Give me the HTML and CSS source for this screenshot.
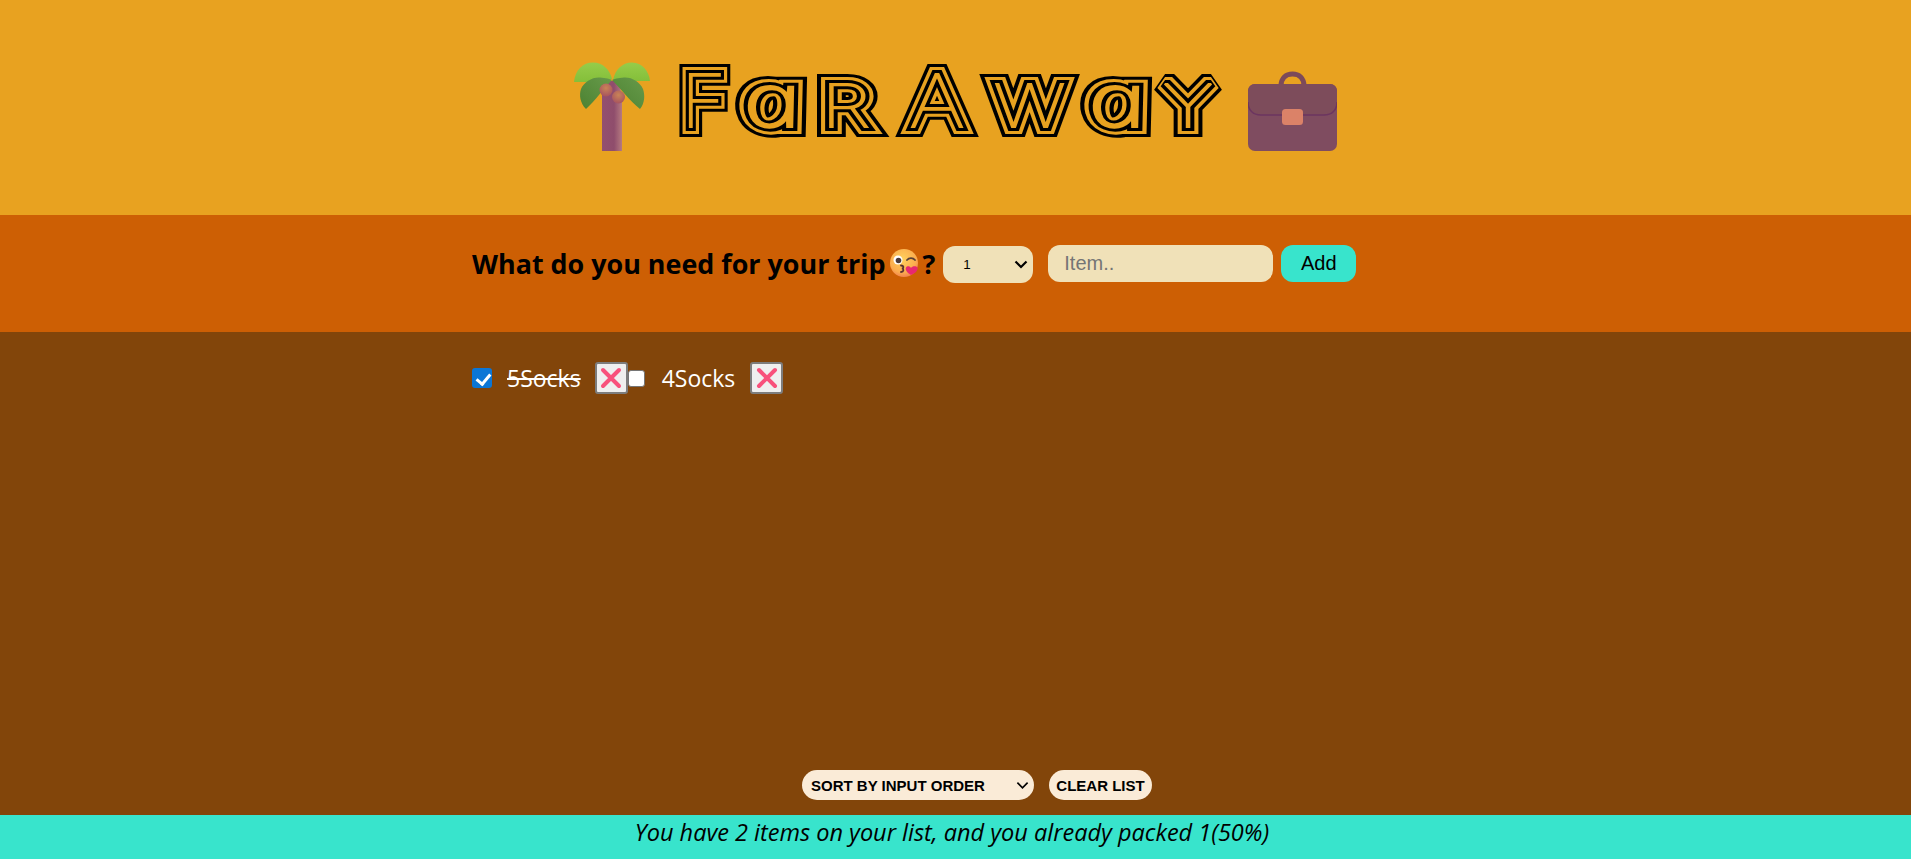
FILE: index.html
```html
<!DOCTYPE html>
<html lang="en">
<head>
<meta charset="utf-8">
<title>Far Away</title>
<link rel="stylesheet" href="styles.css">
</head>
<body>
<div class="app">
  <header class="brand">
    <svg class="palm" viewBox="4 7 76 89" aria-hidden="true">
      <defs>
        <linearGradient id="trunk" x1="0" x2="1" y1="0" y2="0"><stop offset="0" stop-color="#93506f"/><stop offset=".6" stop-color="#8f4d6c"/><stop offset="1" stop-color="#b57a80"/></linearGradient>
        <linearGradient id="leafL" x1="0" x2="0" y1="0" y2="1"><stop offset="0" stop-color="#96cc4a"/><stop offset="1" stop-color="#84bf3a"/></linearGradient>
        <linearGradient id="leafD" x1="1" x2="0" y1="0" y2="1"><stop offset="0" stop-color="#679a4a"/><stop offset="1" stop-color="#4c8232"/></linearGradient>
        <radialGradient id="nut" cx=".5" cy=".35" r=".7"><stop offset="0" stop-color="#c98457"/><stop offset="1" stop-color="#a5505f"/></radialGradient>
      </defs>
      <path d="M36 26H48L52 40V96H32V40Z" fill="url(#trunk)"/>
      <path d="M4 27C5 15 13 7.500 23 7.500C33 7.500 40 15 42 24L22 27Z" fill="url(#leafL)"/>
      <path d="M43 25C45 15 52 7.500 62 7.500C72 7.500 79 16 80 26L62 26Z" fill="url(#leafL)"/>
      <path d="M16 54C10 48 9 40 11 34C14 27 22 22 30 22.500C36 23 40 24 42 25C34 33 25 46 16 54Z" fill="url(#leafD)"/>
      <path d="M70 54C75 48 75 40 73 34C70 27 62 22 54 22.500C48 23 44 24 42 25C50 33 60 46 70 54Z" fill="url(#leafD)"/>
      <circle cx="36" cy="35" r="6.500" fill="url(#nut)"/>
      <circle cx="48.500" cy="42" r="6.500" fill="url(#nut)"/>
    </svg>
    <h1 class="title">
      <svg class="word" viewBox="0 0 543 75" role="img" aria-label="Far Away">
        <defs>
          <g id="letters">
            <text class="big" transform="translate(26.500 62) scale(1.050 1)">F</text>
            <text class="round" transform="translate(100.500 62) scale(1.380 1) skewX(11)">a</text>
            <text class="small up" transform="translate(169 62) scale(1.350 1)">r</text>
            <text class="big" transform="translate(260 62) scale(1.180 1)"> A</text>
            <text class="small up" transform="translate(352.500 62) scale(1.300 1)">w</text>
            <text class="round" transform="translate(445.500 62) scale(1.380 1) skewX(11)">a</text>
            <text class="small up" transform="translate(511 62) scale(1.350 1)">y</text>
          </g>
        </defs>
        <use href="#letters" class="ring ring-1"/>
        <use href="#letters" class="ring ring-2"/>
        <use href="#letters" class="ring ring-3"/>
        <use href="#letters" class="ring ring-4"/>
      </svg>
    </h1>
    <svg class="case" viewBox="0 0 89 80" aria-hidden="true">
      <path d="M33 15C33 7 38 3 44.500 3C51 3 56 7 56 15" fill="none" stroke="#7c4a5a" stroke-width="5"/>
      <rect x="0" y="13" width="89" height="67" rx="7" fill="#7f4c60"/>
      <path d="M0 20C0 16 3 13 7 13H82C86 13 89 16 89 20V31C89 39 84 44 76 44H13C5 44 0 39 0 31Z" fill="#7d4c5b"/>
      <path d="M0 31C0 39 5 44 13 44H76C84 44 89 39 89 31" fill="none" stroke="#6c3560" stroke-width="1.500"/>
      <rect x="34" y="38" width="21" height="16" rx="3.500" fill="#db8268"/>
    </svg>
  </header>

  <form class="add-form">
    <h3 class="question">What do you need for your trip
      <svg class="kiss" viewBox="0 0 30 30" aria-hidden="true">
        <defs><radialGradient id="faceG" cx=".45" cy=".35" r=".7"><stop offset="0" stop-color="#ffd05c"/><stop offset=".7" stop-color="#fbab4e"/><stop offset="1" stop-color="#f2784e"/></radialGradient></defs>
        <circle cx="15" cy="15" r="14" fill="url(#faceG)"/>
        <circle cx="9" cy="12" r="4.500" fill="#fff"/>
        <circle cx="9.500" cy="12.500" r="2.800" fill="#4a3a3a"/>
        <path d="M18 12C20 9.500 24 9.500 26 12" fill="none" stroke="#5a4038" stroke-width="1.800" stroke-linecap="round"/>
        <path d="M12 17.500C15 17.500 15 20 13 20.500C15 21 15 24 12 24" fill="none" stroke="#5a3030" stroke-width="1.800" stroke-linecap="round"/>
        <path d="M22 27C18 24.500 16 22 17 19.500C18 17.500 21 18 22 20C23 18 27 17.500 28.500 19.500C29.500 22 26 25.500 22 27Z" fill="#e8286f"/>
      </svg>?
    </h3>
    <div class="select-wrap qty-wrap">
      <select class="qty"><option>1</option></select>
      <svg class="chev" viewBox="0 0 14 9" aria-hidden="true"><path d="M1.500 1.500L7 7L12.500 1.500" fill="none" stroke="#000" stroke-width="2.200"/></svg>
    </div>
    <input class="item-input" type="text" placeholder="Item..">
    <button class="add-btn" type="button">Add</button>
  </form>

  <main class="list">
    <ul class="items">
      <li class="item">
        <input class="check check-first" type="checkbox" checked>
        <span class="label packed">5Socks</span>
        <button class="del" type="button" aria-label="Remove"><svg viewBox="0 0 24 24"><path d="M4 4L20 20M20 4L4 20" fill="none" stroke="#f8517c" stroke-width="4" stroke-linecap="round"/></svg></button>
      </li>
      <li class="item">
        <input class="check" type="checkbox">
        <span class="label">4Socks</span>
        <button class="del" type="button" aria-label="Remove"><svg viewBox="0 0 24 24"><path d="M4 4L20 20M20 4L4 20" fill="none" stroke="#f8517c" stroke-width="4" stroke-linecap="round"/></svg></button>
      </li>
    </ul>
    <div class="actions">
      <div class="select-wrap">
        <select class="sort"><option>SORT BY INPUT ORDER</option></select>
        <svg class="chev chev-sort" viewBox="0 0 14 9" aria-hidden="true"><path d="M1.500 1.500L7 7L12.500 1.500" fill="none" stroke="#000" stroke-width="1.800"/></svg>
      </div>
      <button class="clear" type="button">CLEAR LIST</button>
    </div>
  </main>

  <footer class="stats">You have 2 items on your list, and you already packed 1(50%)</footer>
</div>
</body>
</html>
```
FILE: styles.css
```css
* { box-sizing: border-box; }
html, body { margin: 0; height: 100%; }
body { font-family: "Open Sans", "Noto Sans", sans-serif; color: #000; }

.app {
  height: 100vh;
  display: grid;
  grid-template-rows: 215px 117px 1fr 44px;
}

/* header */
.brand {
  background: #e8a220;
  display: flex;
  justify-content: center;
  align-items: flex-end;
  padding-bottom: 64px;
}
.palm { width: 76px; height: 89px; margin-right: 27px; }
.case { width: 89px; height: 80px; margin-left: 28px; }
.title { margin: 0 0 11px; line-height: 0; font-size: 0; }
.word { display: block; width: 543px; height: 75px; overflow: visible; }
.word text {
  text-anchor: middle;
  font-family: "Inter", sans-serif;
  font-weight: 100;
}
.word .big { font-size: 73px; }
.word .small { font-size: 59px; }
.word .up { text-transform: uppercase; }
.word .round {
  font-family: "Open Sans", sans-serif;
  font-style: italic;
  font-weight: 300;
  font-size: 76px;
}
.ring { stroke-linejoin: miter; stroke-miterlimit: 2; }
.ring-1 { fill: #000; stroke: #000; stroke-width: 20px; }
.ring-2 { fill: #e8a220; stroke: #e8a220; stroke-width: 14px; }
.ring-3 { fill: #000; stroke: #000; stroke-width: 8px; }
.ring-4 { fill: #e8a220; stroke: #e8a220; stroke-width: 2px; }

/* form */
.add-form {
  background: #cd5f04;
  display: flex;
  align-items: flex-start;
  padding: 30px 0 0 472px;
}
.question {
  margin: -2px 0 0;
  display: flex;
  align-items: center;
  height: 40px;
  font-size: 26.900px;
  font-weight: 700;
  white-space: nowrap;
}
.kiss { width: 30px; height: 30px; margin: 0 3px 0 4px; }
.select-wrap { position: relative; }
.qty-wrap { margin: 1px 15px 0 8px; }
.chev { position: absolute; right: 5px; top: 14px; width: 14px; height: 9px; pointer-events: none; }
.chev-sort { top: 11px; width: 13px; }
.qty {
  display: block;
  appearance: none;
  width: 90px;
  height: 37px;
  padding-left: 20px;
  border: 0;
  border-radius: 12px;
  background-color: #f0e1b8;
  color: #000;
  font: 13.330px "Liberation Sans", sans-serif;
}
.item-input {
  width: 225px;
  height: 37px;
  padding: 0 16px;
  border: 0;
  border-radius: 12px;
  background: #f0e1b8;
  font: 20px "Liberation Sans", sans-serif;
}
.add-btn {
  width: 75px;
  height: 37px;
  margin-left: 8px;
  border: 0;
  border-radius: 12px;
  background: #38e4cc;
  color: #000;
  font: 20px "Liberation Sans", sans-serif;
}

/* list */
.list {
  background: #82450a;
  display: flex;
  flex-direction: column;
  justify-content: space-between;
  padding: 30px 0 15px;
}
.items {
  margin: 0;
  padding: 0 0 0 472px;
  list-style: none;
  display: flex;
}
.item { display: flex; align-items: center; height: 32px; }
.check {
  appearance: none;
  position: relative;
  width: 17px;
  height: 17px;
  margin: 0;
  background: #fff;
  border: 1.500px solid #767676;
  border-radius: 3px;
}
.check-first { width: 20px; height: 20px; background: #0b76d6; border: 0; }
.check-first::after {
  content: "";
  position: absolute;
  left: 7px;
  top: 3px;
  width: 6px;
  height: 11px;
  border: solid #fff;
  border-width: 0 3px 3px 0;
  transform: rotate(40deg);
}
.label { margin: 0 15px 0 17px; font-size: 23px; color: #fff; white-space: nowrap; }
.packed { text-decoration: line-through; margin-left: 15px; margin-right: 14px; }
.del {
  width: 33px;
  height: 32px;
  padding: 0;
  display: flex;
  align-items: center;
  justify-content: center;
  background: #efefef;
  border: 2px solid #7d7d7d;
  border-radius: 3px;
}
.del svg { width: 24px; height: 24px; }

.actions { display: flex; justify-content: center; gap: 15px; padding-left: 43px; }
.sort, .clear {
  display: block;
  height: 30px;
  border: 0;
  border-radius: 15px;
  background-color: #faebd7;
  color: #000;
  font: 700 15px "Liberation Sans", sans-serif;
}
.sort { appearance: none; width: 232px; padding-left: 9px; }
.clear { width: 103px; padding: 0; }

/* footer */
.stats {
  background: #38e4cc;
  text-align: center;
  font-style: italic;
  font-size: 23.500px;
  line-height: 34px;
  padding-right: 7px;
}
```
